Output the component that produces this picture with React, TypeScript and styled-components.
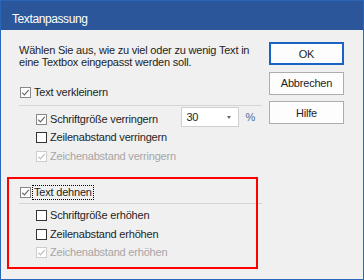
import React from "react";
import styled, { createGlobalStyle } from "styled-components";

const GlobalStyle = createGlobalStyle`
  html, body {
    margin: 0;
    padding: 0;
    background: #f0f0f0;
  }
  body {
    font-family: "Liberation Sans", Arial, sans-serif;
  }
`;

const Window = styled.div`
  position: relative;
  width: 364px;
  height: 280px;
  box-sizing: border-box;
  border: 1px solid #2a66b8;
  background: #f0f0f0;
  display: flex;
  flex-direction: column;
  overflow: hidden;
`;

const TitleBar = styled.div`
  height: 29px;
  box-sizing: border-box;
  padding: 10px 0 0 11px;
  background: #2b579a;
  color: #ffffff;
  font-size: 12px;
  line-height: 16px;
  letter-spacing: -0.4px;
`;

const Body = styled.div`
  flex: 1;
  display: flex;
  padding: 0 19px 0 18px;
  font-size: 11px;
  letter-spacing: -0.2px;
  color: #1e1e1e;
`;

const LeftColumn = styled.div`
  width: 243px;
  display: flex;
  flex-direction: column;
`;

const RightColumn = styled.div`
  margin-left: auto;
  width: 75px;
  padding-top: 12px;
  display: flex;
  flex-direction: column;
  gap: 6.5px;
`;

const Description = styled.p`
  margin: 14px 0 0;
  line-height: 12px;
  white-space: nowrap;
`;

const Group = styled.div<{ $top: number }>`
  position: relative;
  margin-top: ${(p) => p.$top}px;
  display: flex;
  flex-direction: column;
`;

const Row = styled.div<{ $sub?: boolean }>`
  height: 18.5px;
  display: flex;
  align-items: center;
  padding-left: ${(p) => (p.$sub ? 17 : 1)}px;
  white-space: nowrap;
`;

const Separator = styled.div<{ $top: number; $bottom: number }>`
  height: 1px;
  margin: ${(p) => p.$top}px 0 ${(p) => p.$bottom}px;
  background: #d5d5d5;
`;

const Box = styled.span<{ $tone: "normal" | "dark" | "disabled" }>`
  width: 11px;
  height: 11px;
  box-sizing: border-box;
  flex: 0 0 11px;
  display: inline-flex;
  align-items: center;
  justify-content: center;
  background: #ffffff;
  border: 1px solid
    ${(p) => (p.$tone === "dark" ? "#333333" : p.$tone === "disabled" ? "#cccccc" : "#888888")};
  color: ${(p) => (p.$tone === "disabled" ? "#bdbdbd" : "#666666")};
  margin-right: 1px;
`;

const Label = styled.span<{ $focus?: boolean; $disabled?: boolean }>`
  padding: 0 1px;
  line-height: 13px;
  border: 1px dotted ${(p) => (p.$focus ? "#000000" : "transparent")};
  color: ${(p) => (p.$disabled ? "#a6a6a6" : "#1e1e1e")};
`;

const ComboWrap = styled.div`
  margin-left: auto;
  margin-right: 7px;
  align-self: flex-start;
  margin-top: -3px;
  height: 20px;
  display: flex;
  align-items: center;
`;

const Combo = styled.div`
  width: 58px;
  height: 20px;
  box-sizing: border-box;
  border: 1px solid #d0d0d0;
  background: #ffffff;
  display: flex;
  align-items: center;
  justify-content: space-between;
  padding: 0 7px 0 4px;
`;

const Arrow = styled.span`
  width: 0;
  height: 0;
  border-left: 2.5px solid transparent;
  border-right: 2.5px solid transparent;
  border-top: 3px solid #6a6a6a;
`;

const Percent = styled.span`
  margin-left: 6px;
  color: #4f6c99;
`;

const RedFrame = styled.div`
  position: absolute;
  left: -12px;
  top: -6.5px;
  width: 251px;
  height: 92px;
  box-sizing: border-box;
  border: 2px solid #ff0000;
  pointer-events: none;
`;

const Button = styled.button<{ $primary?: boolean }>`
  width: 75px;
  height: 23px;
  box-sizing: border-box;
  padding: 0;
  background: #fdfdfd;
  border: ${(p) => (p.$primary ? "2px solid #1a63c2" : "1px solid #adadad")};
  font-family: "Liberation Sans", Arial, sans-serif;
  font-size: 11px;
  letter-spacing: -0.2px;
  color: #1e1e1e;
`;

type Tone = "normal" | "dark" | "disabled";

const Check: React.FC<{ checked: boolean; tone: Tone }> = ({ checked, tone }) => (
  <Box $tone={tone}>
    {checked && (
      <svg width="9" height="9" viewBox="0 0 9 9">
        <polyline points="1.2,4.6 3.4,6.9 7.8,1.8" fill="none" stroke="currentColor" strokeWidth="1.1" />
      </svg>
    )}
  </Box>
);

type Item = { label: string; checked: boolean; tone: Tone; disabled?: boolean };

const shrinkItems: Item[] = [
  { label: "Schriftgröße verringern", checked: true, tone: "normal" },
  { label: "Zeilenabstand verringern", checked: false, tone: "dark" },
  { label: "Zeichenabstand verringern", checked: true, tone: "disabled", disabled: true },
];

const growItems: Item[] = [
  { label: "Schriftgröße erhöhen", checked: false, tone: "dark" },
  { label: "Zeilenabstand erhöhen", checked: false, tone: "dark" },
  { label: "Zeichenabstand erhöhen", checked: true, tone: "disabled", disabled: true },
];

const App: React.FC = () => {
  return (
    <>
      <GlobalStyle />
      <Window>
        <TitleBar>Textanpassung</TitleBar>
        <Body>
          <LeftColumn>
            <Description>
              Wählen Sie aus, wie zu viel oder zu wenig Text in
              <br />
              eine Textbox eingepasst werden soll.
            </Description>

            <Group $top={15.5}>
              <Row>
                <Check checked tone="normal" />
                <Label>Text verkleinern</Label>
              </Row>
              <Separator $top={3} $bottom={4} />
              {shrinkItems.map((item, i) => (
                <Row $sub key={item.label}>
                  <Check checked={item.checked} tone={item.tone} />
                  <Label $disabled={item.disabled}>{item.label}</Label>
                  {i === 0 && (
                    <ComboWrap>
                      <Combo>
                        <span>30</span>
                        <Arrow />
                      </Combo>
                      <Percent>%</Percent>
                    </ComboWrap>
                  )}
                </Row>
              ))}
            </Group>

            <Group $top={18}>
              <Row>
                <Check checked tone="normal" />
                <Label $focus>Text dehnen</Label>
              </Row>
              <Separator $top={1} $bottom={2.5} />
              {growItems.map((item) => (
                <Row $sub key={item.label}>
                  <Check checked={item.checked} tone={item.tone} />
                  <Label $disabled={item.disabled}>{item.label}</Label>
                </Row>
              ))}
              <RedFrame />
            </Group>
          </LeftColumn>

          <RightColumn>
            <Button $primary>OK</Button>
            <Button>Abbrechen</Button>
            <Button>Hilfe</Button>
          </RightColumn>
        </Body>
      </Window>
    </>
  );
};

export default App;
